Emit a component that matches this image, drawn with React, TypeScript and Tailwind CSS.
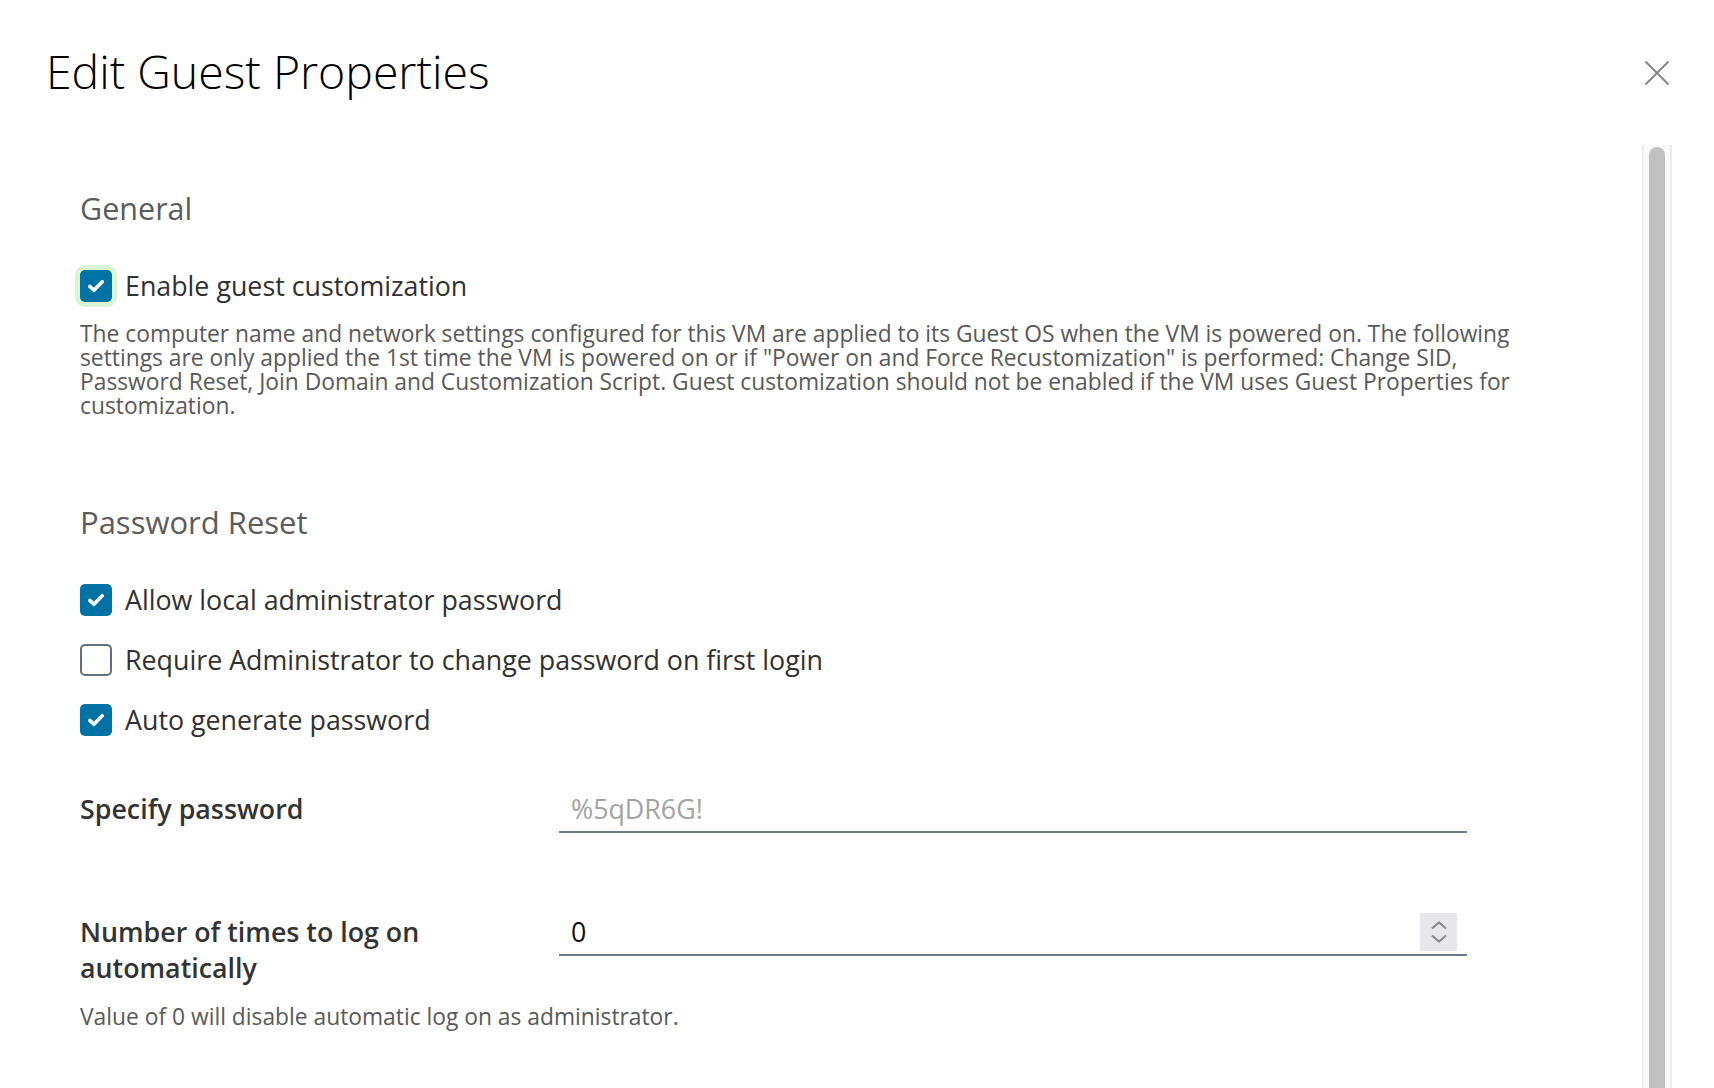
import React from "react";

const font = { fontFamily: '"Open Sans", "Liberation Sans", sans-serif' };

function Checkbox({ checked, focused }: { checked?: boolean; focused?: boolean }) {
  if (!checked) {
    return <span className="h-[32px] w-[32px] shrink-0 rounded-[5px] border-2 border-[#637079] bg-white" />;
  }
  return (
    <span
      className={`flex h-[32px] w-[32px] shrink-0 items-center justify-center rounded-[5px] bg-[#0072a3] ${
        focused ? "ring-[5px] ring-[#daf5d3]" : ""
      }`}
    >
      <svg width="20" height="20" viewBox="0 0 20 20" fill="none">
        <path d="M3.8 10.4l4.1 3.9L16.3 5.8" stroke="white" strokeWidth="3.6" strokeLinecap="round" strokeLinejoin="round" />
      </svg>
    </span>
  );
}

function CheckRow({ label, checked, focused }: { label: string; checked?: boolean; focused?: boolean }) {
  return (
    <div className="flex h-[36px] items-center gap-[13px]">
      <Checkbox checked={checked} focused={focused} />
      <span className="text-[26.8px] leading-[36px] text-[#313131]">{label}</span>
    </div>
  );
}

export default function App() {
  return (
    <div className="h-[1088px] w-[1714px] overflow-hidden bg-white" style={font}>
      {/* header */}
      <div className="flex h-[145px] items-start justify-between pl-[46px] pr-[44px] pt-[44px]">
        <h1 className="text-[46.4px] font-light leading-[54px] text-[#000000]">Edit Guest Properties</h1>
        <button className="mt-[16px] text-[#868686]">
          <svg width="26" height="26" viewBox="0 0 26 26" fill="none">
            <path d="M1.5 1.5l23 23M24.5 1.5l-23 23" stroke="currentColor" strokeWidth="2" />
          </svg>
        </button>
      </div>

      {/* body */}
      <div className="flex h-[943px]">
        <div className="flex-1 pl-[80px] pt-[45px]">
          <h2 className="text-[30.5px] leading-[36px] text-[#5c5c5c]">General</h2>
          <div className="mt-[42px]">
            <CheckRow label="Enable guest customization" checked focused />
          </div>
          <p className="mt-[18px] w-[1440px] text-[22.8px] leading-[24px] text-[#595959]">
            The computer name and network settings configured for this VM are applied to its Guest OS when the VM is
            powered on. The following settings are only applied the 1st time the VM is powered on or if "Power on and
            Force Recustomization" is performed: Change SID, Password Reset, Join Domain and Customization Script. Guest
            customization should not be enabled if the VM uses Guest Properties for customization.
          </p>

          <h2 className="mt-[86px] text-[31px] leading-[36px] text-[#5c5c5c]">Password Reset</h2>
          <div className="mt-[42px] flex flex-col gap-[24px]">
            <CheckRow label="Allow local administrator password" checked />
            <CheckRow label="Require Administrator to change password on first login" />
            <CheckRow label="Auto generate password" checked />
          </div>

          <div className="mt-[49px] flex">
            <label className="w-[479px] pt-[4px] text-[26.8px] font-semibold leading-[36px] text-[#333333]">
              Specify password
            </label>
            <div className="flex h-[46px] w-[908px] items-center border-b-2 border-[#6b7a83] px-[12px]">
              <span className="text-[26.8px] text-[#a3a3a3]">%5qDR6G!</span>
            </div>
          </div>

          <div className="mt-[77px] flex">
            <label className="w-[479px] pt-[4px] text-[26.8px] font-semibold leading-[36px] text-[#333333]">
              Number of times to log on
              <br />
              automatically
            </label>
            <div className="relative flex h-[46px] w-[908px] items-center border-b-2 border-[#6b7a83] px-[12px]">
              <span className="text-[26.8px] text-[#111111]">0</span>
              <div className="absolute right-[10px] top-[3px] flex h-[38px] w-[37px] flex-col items-center justify-center gap-[4px] bg-[#e8e8ec]">
                <svg width="18" height="9" viewBox="0 0 18 9" fill="none">
                  <path d="M2 7.5l7-6 7 6" stroke="#8b8b96" strokeWidth="2.2" />
                </svg>
                <svg width="18" height="9" viewBox="0 0 18 9" fill="none">
                  <path d="M2 1.5l7 6 7-6" stroke="#8b8b96" strokeWidth="2.2" />
                </svg>
              </div>
            </div>
          </div>

          <p className="mt-[19px] text-[22.8px] leading-[24px] text-[#595959]">
            Value of 0 will disable automatic log on as administrator.
          </p>
        </div>

        {/* scrollbar */}
        <div className="mr-[42px] flex w-[30px] justify-center border-x-2 border-[#ececec] bg-[#fafafa]">
          <div className="mt-[2px] h-full w-[16px] rounded-t-[8px] bg-[#c1c1c1]" />
        </div>
      </div>
    </div>
  );
}
